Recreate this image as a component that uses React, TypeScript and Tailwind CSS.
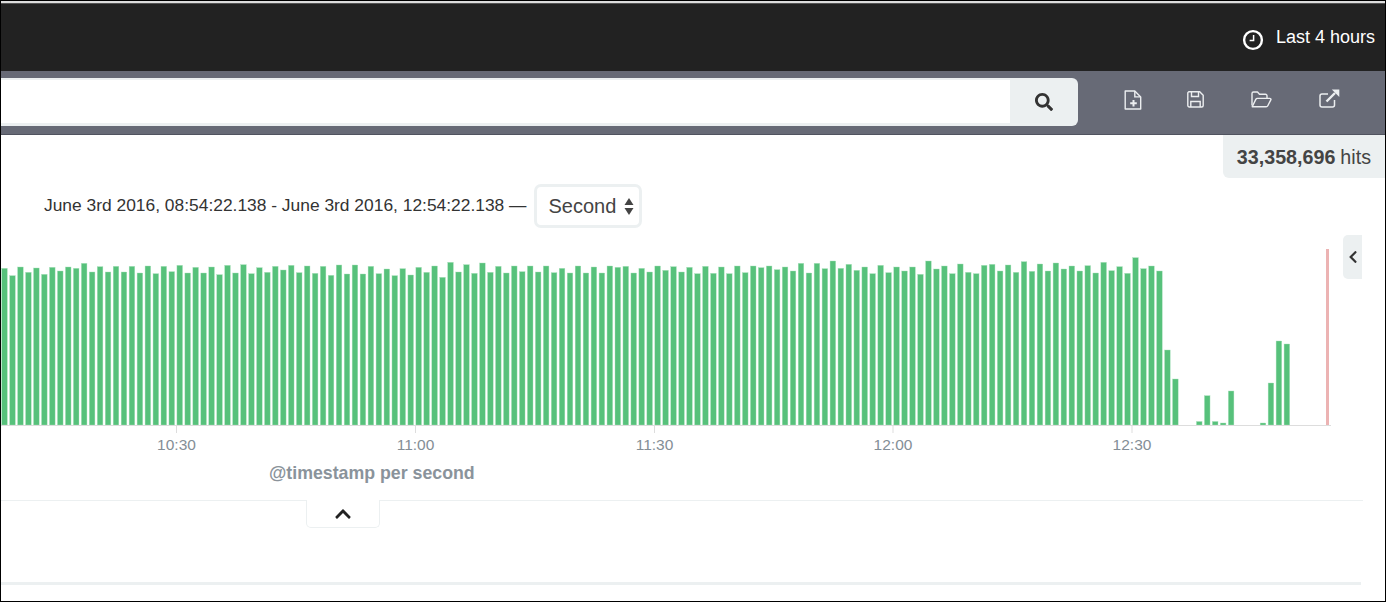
import { FaChevronLeft, FaChevronUp, FaSearch } from "react-icons/fa";

// top edge of each bar, in page pixels, read from the screenshot
const ZOOM_TOPS = [
  40, 62, 36, 52, 39, 58, 37, 48, 36, 40, 25, 51, 35, 51, 34, 51, 34, 54, 33, 56, 34, 50, 31, 54, 37,
  54, 36, 59, 31, 54, 29, 56, 38, 52, 34, 45, 31, 53, 33, 55, 34, 61, 30, 57, 30, 57, 34, 56, 42, 62,
  41, 60, 37, 52, 33, 67, 22, 51, 29, 55, 24, 52, 34, 54, 33, 50, 33, 51, 33, 53, 40, 54, 33, 54, 36,
  54, 33, 37, 34, 54, 40, 51, 33, 46, 35, 51, 37, 56, 34, 55, 36, 56, 33, 53, 33, 38, 33, 44, 36, 48,
  25, 54, 25, 41, 18, 40, 28, 46, 36, 56, 31, 53, 36, 48, 36, 58, 18, 42, 33, 56, 27, 52, 56, 31, 28,
  48, 30, 52, 20, 49, 27, 48, 24, 42, 33, 48, 32, 54, 22, 47, 35, 55, 8, 41, 33, 48,
];

const BAR_TOPS: Array<number | null> = [
  ...ZOOM_TOPS.map((z) => 255 + z / 3),
  350, 379, null, null, 421.5, 395.7, 421.5, 423, 391, null, null, null, 423, 383, 341, 344,
];

const TICKS = [
  { x: 176.5, label: "10:30" },
  { x: 415.5, label: "11:00" },
  { x: 654.5, label: "11:30" },
  { x: 893, label: "12:00" },
  { x: 1132, label: "12:30" },
];

function Histogram() {
  return (
    <svg width={1340} height={224} viewBox="1 236 1340 224" className="block">
      {BAR_TOPS.map((top, i) =>
        top === null ? null : (
          <rect
            key={i}
            x={1.7 + 7.965 * i}
            y={top}
            width={5.6}
            height={425 - top}
            fill="#57c17b"
            stroke="#a8e0bb"
            strokeWidth={0.4}
          />
        ),
      )}
      <rect x={1326} y={249} width={3} height={176} fill="#ecb3b3" />
      <rect x={1} y={425} width={1330} height={1} fill="#dddddd" />
      {TICKS.map((t) => (
        <g key={t.label}>
          <rect x={t.x - 0.5} y={426} width={1} height={7} fill="#dddddd" />
          <text
            x={t.x}
            y={450}
            textAnchor="middle"
            fontSize={15.5}
            fill="#848e96"
            fontFamily="'Liberation Sans', Arial, sans-serif"
          >
            {t.label}
          </text>
        </g>
      ))}
    </svg>
  );
}

function ClockIcon() {
  return (
    <svg width={22} height={22} viewBox="0 0 22 22" fill="none" stroke="#ffffff" className="shrink-0">
      <circle cx={11} cy={11} r={8.9} strokeWidth={2.4} />
      <path d="M11.6 6v5.6H7.6" strokeWidth={1.5} />
    </svg>
  );
}

function NewFileIcon() {
  return (
    <svg width={18} height={20} viewBox="0 0 18 20" fill="none" stroke="#eceef0" strokeWidth={1.4}>
      <path d="M1.2 1h9.6l5.9 5.9v12.1H1.200z" strokeLinejoin="round" />
      <path d="M10.800 1v5.900h5.900" />
      <path d="M9.500 10v6.500M6.200 13.200h6.600" strokeWidth={2} />
    </svg>
  );
}

function SaveIcon() {
  return (
    <svg width={17} height={17} viewBox="0 0 17 17" fill="none" stroke="#eceef0" strokeWidth={1.400}>
      <path d="M1.700.8h11l3.500 3.500v10.200a1.500 1.500 0 0 1-1.500 1.500H2.300a1.500 1.500 0 0 1-1.500-1.500V2.300A1.500 1.500 0 0 1 1.700.8z" />
      <path d="M4.500 1v4.500h7V1" />
      <path d="M3.800 16v-5.500h9.400V16" />
    </svg>
  );
}

function FolderIcon() {
  return (
    <svg width={21} height={17} viewBox="0 0 21 17" fill="none" stroke="#eceef0" strokeWidth={1.400} strokeLinejoin="round">
      <path d="M1 14.500V2.500A1.500 1.500 0 0 1 2.500 1h4l2 2.200h6a1.500 1.500 0 0 1 1.500 1.500v2.500" />
      <path d="M1.200 15.800l3.600-7.400a1.800 1.800 0 0 1 1.600-1h12.400c.9 0 1.400.8 1 1.500l-3 5.900a1.800 1.800 0 0 1-1.600 1H1.200z" />
    </svg>
  );
}

function ExternalIcon() {
  return (
    <svg width={21} height={19} viewBox="0 0 21 19" fill="none" stroke="#eceef0" strokeWidth={1.500}>
      <path d="M15.500 11v5a2 2 0 0 1-2 2H3a2 2 0 0 1-2-2V7a2 2 0 0 1 2-2h6" />
      <path d="M7.500 12.500L16 4" strokeWidth={2.400} />
      <path d="M12.800 0.500h7.500v7.500z" fill="#eceef0" stroke="none" />
    </svg>
  );
}

export default function App() {
  return (
    <div
      className="flex h-[602px] w-[1386px] flex-col overflow-hidden border border-black bg-white text-[#444444]"
      style={{ fontFamily: "'Liberation Sans', Arial, sans-serif" }}
    >
      <div className="h-[3px] shrink-0 border-b border-[#555555] bg-[#dddddd]" />

      <header className="flex h-[67px] shrink-0 justify-end bg-[#222222] pr-[10px] pt-[22px] text-white">
        <div className="flex items-start gap-[12px]">
          <div className="mt-[3px]">
            <ClockIcon />
          </div>
          <span className="text-[18px] leading-[22px]">Last 4 hours</span>
        </div>
      </header>

      <div className="flex h-[64px] shrink-0 items-start border-b border-[#50535f] bg-[#676a76] pt-[7px]">
        <div className="flex h-[48px] w-[1077px] overflow-hidden rounded-r-[6px] bg-[#ecf0f1]">
          <div className="mb-[3px] mt-[2px] flex-1 bg-white" />
          <button type="button" className="flex w-[68px] items-center justify-center text-[#333333]">
            <FaSearch size={18} />
          </button>
        </div>
        <div className="flex items-center">
          <div className="ml-[46px] mt-[12px] flex">
            <NewFileIcon />
          </div>
          <div className="ml-[45px] mt-[11px] flex">
            <SaveIcon />
          </div>
          <div className="ml-[47px] mt-[11px] flex">
            <FolderIcon />
          </div>
          <div className="ml-[47px] mt-[9px] flex">
            <ExternalIcon />
          </div>
        </div>
      </div>

      <main className="flex flex-1 flex-col">
        <div className="flex justify-end">
          <div className="flex h-[43px] items-center rounded-bl-[6px] bg-[#ecf0f1] pl-[14px] pr-[14px] pt-[3px] text-[19.700px]">
            <span className="font-bold">33,358,696</span>
            <span className="ml-[5px]">hits</span>
          </div>
        </div>

        <div className="mt-[6px] flex items-center pl-[43px]">
          <span className="pb-[2px] text-[17.400px] text-[#333333]">
            June 3rd 2016, 08:54:22.138 - June 3rd 2016, 12:54:22.138 —
          </span>
          <div className="ml-[8px] flex h-[44px] w-[108px] items-center rounded-[7px] border-[3px] border-[#ecf0f1] pl-[11px] text-[20px]">
            <span>Second</span>
            <svg width={10} height={17} viewBox="0 0 10 17" className="ml-[8px]" fill="#444444">
              <path d="M5 0l4.500 7H.5z" />
              <path d="M5 17l4.500-7H.5z" />
            </svg>
          </div>
        </div>

        <div className="relative mt-[8px] h-[224px]">
          <Histogram />
          <button
            type="button"
            className="absolute left-[1342px] top-[-1px] flex h-[44px] w-[19px] items-center justify-center rounded-l-[5px] bg-[#ecf0f1] text-[#333333]"
          >
            <FaChevronLeft size={14} />
          </button>
        </div>

        <div className="pl-[268px] pt-[3px] text-[17.750px] font-bold leading-[20px] text-[#8a939b]">
          @timestamp per second
        </div>

        <div className="relative mt-[17px] w-[1362px] border-t border-[#ecf0f1]">
          <button
            type="button"
            className="absolute left-[305px] top-[-1px] flex h-[28px] w-[74px] items-center justify-center rounded-b-[5px] border border-t-0 border-[#ecf0f1] bg-white text-[#222222]"
          >
            <FaChevronUp size={18} />
          </button>
        </div>

        <div className="mt-[81px] h-[3px] w-[1360px] bg-[#ecf0f1]" />
      </main>
    </div>
  );
}
